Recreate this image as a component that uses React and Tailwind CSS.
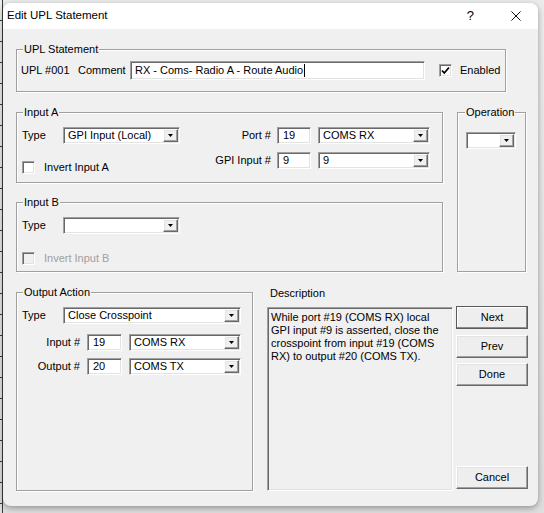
const SUNKEN =
  'border border-t-[#a0a0a0] border-l-[#a0a0a0] border-b-white border-r-white shadow-[inset_1px_1px_0_#696969,inset_-1px_-1px_0_#e3e3e3]';
const RAISED =
  'border border-t-white border-l-white border-b-[#696969] border-r-[#696969] shadow-[inset_-1px_-1px_0_#a0a0a0,inset_1px_1px_0_#e3e3e3]';

function Group({ label, className = '', labelClass = 'left-[6px]', children }) {
  return (
    <div
      className={`relative border border-[#a0a0a0] shadow-[inset_1px_1px_0_#fff,1px_1px_0_#fff] ${className}`}
    >
      {/* legend sits over the etched border */}
      <span className={`absolute -top-[8px] ${labelClass} bg-[#f0f0f0] px-[1px] leading-[14px]`}>
        {label}
      </span>
      {children}
    </div>
  );
}

function Combo({ value, className = '' }) {
  return (
    <div className={`flex h-[17px] shrink-0 items-center bg-white p-[1px] pl-[4px] ${SUNKEN} ${className}`}>
      <span className="flex-1 truncate leading-[13px]">{value}</span>
      <span className={`flex h-[13px] w-[15px] items-center justify-center bg-[#f0f0f0] ${RAISED}`}>
        <svg width="5" height="3" viewBox="0 0 5 3">
          <polygon points="0,0 5,0 2.5,3" fill="#000" />
        </svg>
      </span>
    </div>
  );
}

function Edit({ value, className = '' }) {
  return (
    <div className={`flex h-[17px] shrink-0 items-center bg-white pl-[5px] leading-[13px] ${SUNKEN} ${className}`}>
      {value}
    </div>
  );
}

function Check({ checked, disabled }) {
  return (
    <span
      className={`flex h-[13px] w-[13px] shrink-0 items-center justify-center ${SUNKEN} ${
        disabled ? 'bg-[#f0f0f0]' : 'bg-white'
      }`}
    >
      {checked && (
        <svg width="9" height="9" viewBox="0 0 9 9">
          <path d="M1 4.5 L3.3 7 L8 1.5" fill="none" stroke="#000" strokeWidth="1.8" />
        </svg>
      )}
    </span>
  );
}

function Button({ children, isDefault, className = '' }) {
  return (
    <div
      className={`flex h-[23px] w-[72px] items-center justify-center bg-[#eeeeee] ${
        isDefault
          ? 'border border-[#5a5a5a] shadow-[inset_-1px_-1px_0_#8a8a8a,inset_1px_1px_0_#fff]'
          : RAISED
      } ${className}`}
    >
      {children}
    </div>
  );
}

export default function App() {
  return (
    <div className="flex h-[513px] w-[544px] flex-col overflow-hidden bg-[#c4c4c4] font-['Liberation_Sans',Arial,sans-serif] text-[11px] text-black">
      <div className="flex flex-1 bg-[linear-gradient(#ececec,#dedede)]">
        {/* ruler strip at the far left */}
        <div className="w-[3px] shrink-0 border-r border-[#3a3a3a] bg-[repeating-linear-gradient(to_bottom,transparent_0,transparent_20px,#3a3a3a_20px,#3a3a3a_21px)]" />

        <div className="mt-[3px] mb-[7px] flex w-[535px] shrink-0 flex-col overflow-hidden rounded-[8px] bg-[#f0f0f0] shadow-[0_2px_6px_rgba(0,0,0,0.35)]">
          {/* title bar */}
          <div className="flex h-[26px] shrink-0 items-center bg-white pl-[4px] pr-[17px]">
            <span className="flex-1 text-[11.5px]">Edit UPL Statement</span>
            <span className="mr-[37px] text-[13px]">?</span>
            <svg width="10" height="10" viewBox="0 0 10 10">
              <path d="M0.5 0.5 L9.5 9.5 M9.5 0.5 L0.5 9.5" stroke="#111" strokeWidth="1" />
            </svg>
          </div>

          {/* dialog body */}
          <div className="flex flex-1 flex-col pl-[13px] pt-[20px]">
            <Group label="UPL Statement" className="flex h-[43px] w-[490px] items-center pl-[4px]">
              <span className="w-[57px]">UPL #001</span>
              <span className="w-[52px]">Comment</span>
              <div className={`flex h-[19px] w-[295px] items-center bg-white pl-[4px] ${SUNKEN}`}>
                RX - Coms- Radio A - Route Audio
                <span className="ml-[1px] h-[13px] w-[1px] bg-black" />
              </div>
              <span className="ml-[14px]">
                <Check checked />
              </span>
              <span className="ml-[8px]">Enabled</span>
            </Group>

            <div className="mt-[20px] flex">
              <div className="flex w-[427px] flex-col">
                <Group label="Input A" className="h-[71px] pl-[5px] pt-[14px]">
                  <div className="flex items-center">
                    <span className="w-[41px]">Type</span>
                    <Combo value="GPI Input (Local)" className="w-[117px]" />
                    <span className="w-[97px] pr-[6px] text-right">Port #</span>
                    <Edit value="19" className="w-[34px]" />
                    <Combo value="COMS RX" className="ml-[7px] w-[112px]" />
                  </div>
                  <div className="mt-[8px] flex items-start">
                    <div className="mt-[7px] flex w-[158px] items-center">
                      <Check />
                      <span className="ml-[9px]">Invert Input A</span>
                    </div>
                    <div className="flex items-center">
                      <span className="w-[97px] pr-[6px] text-right">GPI Input #</span>
                      <Edit value="9" className="w-[34px]" />
                      <Combo value="9" className="ml-[7px] w-[112px]" />
                    </div>
                  </div>
                </Group>

                <Group label="Input B" className="mt-[19px] h-[70px] pl-[5px] pt-[14px]">
                  <div className="flex items-center">
                    <span className="w-[41px]">Type</span>
                    <Combo value="" className="w-[117px]" />
                  </div>
                  <div className="mt-[16px] flex items-center">
                    <Check disabled />
                    <span className="ml-[9px] text-[#a0a0a0]">Invert Input B</span>
                  </div>
                </Group>
              </div>

              <Group label="Operation" labelClass="left-[7px]" className="ml-[14px] h-[160px] w-[69px] pl-[8px] pt-[19px]">
                <Combo value="" className="w-[50px]" />
              </Group>
            </div>

            <div className="mt-[14px] flex">
              <Group label="Output Action" className="mt-[6px] h-[199px] w-[237px] pl-[5px] pt-[14px]">
                <div className="flex items-center">
                  <span className="w-[41px]">Type</span>
                  <Combo value="Close Crosspoint" className="w-[178px]" />
                </div>
                <div className="mt-[10px] flex items-center">
                  <span className="w-[65px] pr-[7px] text-right">Input #</span>
                  <Edit value="19" className="w-[35px]" />
                  <Combo value="COMS RX" className="ml-[7px] w-[112px]" />
                </div>
                <div className="mt-[7px] flex items-center">
                  <span className="w-[65px] pr-[7px] text-right">Output #</span>
                  <Edit value="20" className="w-[35px]" />
                  <Combo value="COMS TX" className="ml-[7px] w-[112px]" />
                </div>
              </Group>

              <div className="ml-[14px] flex w-[186px] flex-col">
                <span className="pl-[3px] leading-[14px]">Description</span>
                <div className={`mt-[7px] h-[184px] bg-[#f0f0f0] pl-[3px] pt-[3px] leading-[13px] ${SUNKEN}`}>
                  <div className="whitespace-nowrap">While port #19 (COMS RX) local</div>
                  <div className="whitespace-nowrap">GPI input #9 is asserted, close the</div>
                  <div className="whitespace-nowrap">crosspoint from input #19 (COMS</div>
                  <div className="whitespace-nowrap">RX) to output #20 (COMS TX).</div>
                </div>
              </div>

              <div className="ml-[3px] flex w-[72px] flex-col">
                <Button isDefault className="mt-[20px]">Next</Button>
                <Button className="mt-[6px]">Prev</Button>
                <Button className="mt-[5px]">Done</Button>
                <Button className="mt-[80px]">Cancel</Button>
              </div>
            </div>
          </div>
        </div>
      </div>
    </div>
  );
}
